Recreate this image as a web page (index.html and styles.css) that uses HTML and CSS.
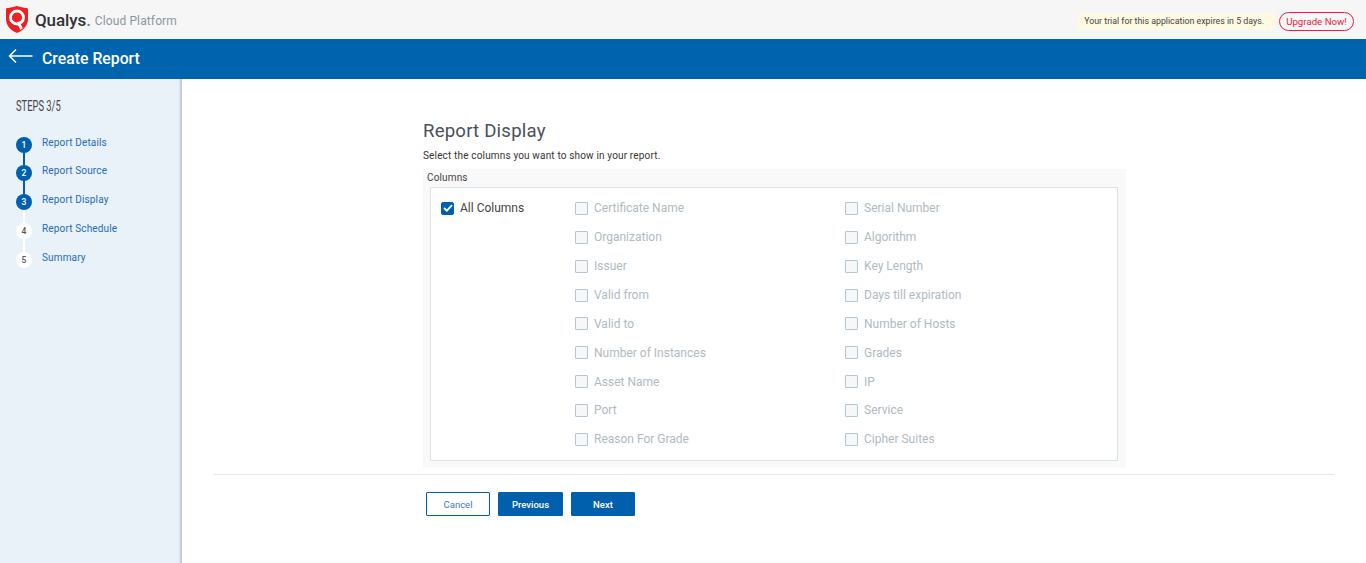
FILE: index.html
```html
<!DOCTYPE html>
<html lang="en">
<head>
    <meta charset="UTF-8">
    <meta name="viewport" content="width=device-width, initial-scale=1.0">
    <title>Create Report</title>
    <link rel="stylesheet" href="styles.css">
</head>
<body>
    <header class="topbar">
        <div class="brand">
            <svg class="brand-logo" width="22" height="27" viewBox="0 0 22 27">
                <path d="M0 3.500C0 2.600.5 2.200 1.300 2.100 4.500 1.700 7.800 1 10.200.2c.5-.2 1.100-.2 1.600 0 2.400.8 5.700 1.500 8.900 1.900.8.1 1.300.5 1.300 1.400V13c0 6.500-4.500 11-10.500 13.800-.3.1-.7.1-1 0C4.500 24 0 19.500 0 13Z" fill="#ed2024"/>
                <circle cx="11" cy="11.500" r="6.500" fill="none" stroke="#fff" stroke-width="2.800"/>
                <path d="M12 16 15.500 23" stroke="#fff" stroke-width="2.800" fill="none"/>
            </svg>
            <span class="brand-name">Qualys<span class="brand-dot">.</span></span>
            <span class="brand-sub">Cloud Platform</span>
        </div>
        <div class="trial">
            <span class="trial-note">Your trial for this application expires in 5 days.</span>
            <a class="upgrade" href="#">Upgrade Now!</a>
        </div>
    </header>

    <div class="titlebar">
        <svg class="back" width="25" height="16" viewBox="0 0 25 16">
            <path d="M24.500 8H1.500M8 1.500 1.500 8 8 14.500" fill="none" stroke="#fff" stroke-width="1.500"/>
        </svg>
        <h1>Create Report</h1>
    </div>

    <div class="layout">
        <aside class="sidebar">
            <div class="steps-title">STEPS 3/5</div>
            <ol class="steps">
                <li class="step done"><span class="num">1</span><a href="#">Report Details</a></li>
                <li class="step done"><span class="num">2</span><a href="#">Report Source</a></li>
                <li class="step done current"><span class="num">3</span><a href="#">Report Display</a></li>
                <li class="step"><span class="num">4</span><a href="#">Report Schedule</a></li>
                <li class="step"><span class="num">5</span><a href="#">Summary</a></li>
            </ol>
        </aside>

        <main class="content">
            <section class="panel">
                <h2>Report Display</h2>
                <p class="hint">Select the columns you want to show in your report.</p>
                <div class="columns">
                    <div class="columns-label">Columns</div>
                    <div class="columns-box">
                        <label class="check all">
                            <span class="box checked">
                                <svg width="10" height="8" viewBox="0 0 10 8"><path d="M1 4 3.800 6.700 9 1.200" fill="none" stroke="#fff" stroke-width="1.800"/></svg>
                            </span>
                            All Columns
                        </label>
                        <div class="col-list">
                            <label class="check"><span class="box"></span>Certificate Name</label>
                            <label class="check"><span class="box"></span>Organization</label>
                            <label class="check"><span class="box"></span>Issuer</label>
                            <label class="check"><span class="box"></span>Valid from</label>
                            <label class="check"><span class="box"></span>Valid to</label>
                            <label class="check"><span class="box"></span>Number of Instances</label>
                            <label class="check"><span class="box"></span>Asset Name</label>
                            <label class="check"><span class="box"></span>Port</label>
                            <label class="check"><span class="box"></span>Reason For Grade</label>
                        </div>
                        <div class="col-list">
                            <label class="check"><span class="box"></span>Serial Number</label>
                            <label class="check"><span class="box"></span>Algorithm</label>
                            <label class="check"><span class="box"></span>Key Length</label>
                            <label class="check"><span class="box"></span>Days till expiration</label>
                            <label class="check"><span class="box"></span>Number of Hosts</label>
                            <label class="check"><span class="box"></span>Grades</label>
                            <label class="check"><span class="box"></span>IP</label>
                            <label class="check"><span class="box"></span>Service</label>
                            <label class="check"><span class="box"></span>Cipher Suites</label>
                        </div>
                    </div>
                </div>
            </section>
            <div class="actions">
                <button class="btn btn-outline" type="button">Cancel</button>
                <button class="btn btn-prev" type="button">Previous</button>
                <button class="btn" type="button">Next</button>
            </div>
        </main>
    </div>
</body>
</html>
```

FILE: styles.css
```css
* {
    box-sizing: border-box;
}
html, body {
    height: 100%;
}
body {
    margin: 0;
    font-family: Roboto, "Liberation Sans", sans-serif;
    background-color: #fff;
    color: #333;
    display: flex;
    flex-direction: column;
    overflow: hidden;
}
.topbar {
    height: 39px;
    flex: none;
    background-color: #f6f6f6;
    display: flex;
    justify-content: space-between;
    align-items: center;
    padding: 0 12px 0 6px;
}
.brand {
    display: flex;
    align-items: center;
}
.brand-logo {
    margin-top: -1px;
}
.brand-name {
    margin-left: 7px;
    font-size: 17px;
    font-weight: 500;
    letter-spacing: -0.1px;
    color: #333;
}
.brand-dot {
    color: #6c7a86;
}
.brand-sub {
    margin-left: 4px;
    margin-top: 3px;
    font-size: 12px;
    letter-spacing: 0.12px;
    color: #8b96a1;
}
.trial {
    display: flex;
    align-items: center;
    gap: 4px;
}
.trial-note {
    height: 17px;
    line-height: 16px;
    padding: 0 11px 0 7px;
    font-size: 8.800px;
    color: #444;
    background-color: #fef9e3;
    border-radius: 2px;
    margin-top: 3px;
}
.upgrade {
    height: 19px;
    width: 75px;
    line-height: 18px;
    margin-top: 3px;
    text-align: center;
    font-size: 9.700px;
    color: #ed1c3c;
    text-decoration: none;
    border: 1px solid #ed1c3c;
    border-radius: 10px;
}
.titlebar {
    height: 40px;
    flex: none;
    background-color: #0063ae;
    color: #fff;
    display: flex;
    align-items: center;
    padding-left: 8px;
}
.back {
    margin-top: -7px;
}
.titlebar h1 {
    margin: 0 0 1px 9px;
    font-size: 15.800px;
    font-weight: 500;
}
.layout {
    flex: 1;
    display: flex;
    min-height: 0;
}
.sidebar {
    width: 182px;
    flex: none;
    background-color: #e9f1f9;
    box-shadow: inset -3px 0 2px -1px #bfc7cd;
    padding: 19px 0 0 16px;
}
.steps-title {
    font-size: 14px;
    line-height: 16px;
    color: #444;
    transform: scaleX(0.67);
    transform-origin: left;
}
.steps {
    list-style: none;
    margin: 21px 0 0;
    padding: 0;
}
.step {
    position: relative;
    display: flex;
    height: 29px;
}
.step:first-child {
    height: 28px;
}
.step a {
    margin: 1px 0 0 10px;
    font-size: 10px;
    line-height: 14px;
    letter-spacing: 0.15px;
    color: #1f6db5;
    text-decoration: none;
}
.num {
    position: relative;
    z-index: 1;
    width: 16px;
    height: 16px;
    margin-top: 2px;
    flex: none;
    border-radius: 50%;
    background-color: #fff;
    color: #555;
    font-size: 8.500px;
    font-weight: 500;
    line-height: 16px;
    text-align: center;
}
.step.done .num {
    background-color: #0060ad;
    color: #fff;
}
/* connector to the next step */
.step::after {
    content: "";
    position: absolute;
    left: 7px;
    top: 16px;
    width: 2px;
    height: 16px;
    background-color: #fff;
}
.step.done::after {
    background-color: #0060ad;
}
.step.current::after {
    background-color: #fff;
}
.step:last-child::after {
    display: none;
}
.content {
    flex: 1;
    min-width: 0;
    padding: 0 32px;
}
.panel {
    margin-left: 209px;
    width: 703px;
    padding-top: 41px;
}
.panel h2 {
    margin: 0;
    font-size: 18.600px;
    font-weight: 400;
    line-height: 22px;
    letter-spacing: 0.2px;
    color: #4a5058;
}
.hint {
    margin: 8px 0 0;
    font-size: 10px;
    line-height: 12px;
    letter-spacing: 0.16px;
    color: #333;
}
.columns {
    margin-top: 7px;
    padding: 0 8px 7px 7px;
    background-color: #f9f9f9;
}
.columns-label {
    height: 18px;
    margin-left: -3px;
    font-size: 10px;
    line-height: 18px;
    letter-spacing: 0.15px;
    color: #444;
}
.columns-box {
    height: 274px;
    padding: 6px 0 0 10px;
    background-color: #fff;
    border: 1px solid #dbe5e5;
    display: flex;
}
.all {
    width: 134px;
}
.col-list {
    width: 270px;
    display: flex;
    flex-direction: column;
}
.check {
    display: flex;
    align-items: center;
    height: 28.870px;
    font-size: 12px;
    color: #b0babf;
}
.check.all {
    color: #444;
    align-self: flex-start;
}
.box {
    width: 13px;
    height: 13px;
    margin-right: 6px;
    flex: none;
    background-color: #f5f7f8;
    border: 1px solid #b4c6cf;
    border-radius: 1px;
}
.box.checked {
    background-color: #0060ad;
    border-color: #0060ad;
    border-radius: 2px;
    display: flex;
    align-items: center;
    justify-content: center;
}
.actions {
    margin-top: 6px;
    padding: 17px 0 0 212px;
    border-top: 1px solid #e3e6e6;
    display: flex;
    gap: 8px;
}
.btn {
    width: 64px;
    height: 24px;
    padding: 0;
    font-family: inherit;
    font-size: 9.500px;
    font-weight: 500;
    color: #fff;
    background-color: #0060ad;
    border: 1px solid #0060ad;
    border-radius: 1px;
    cursor: pointer;
}
.btn-prev {
    width: 65px;
}
.btn-outline {
    font-weight: 400;
    color: #3f7ab5;
    background-color: #fff;
}
```
